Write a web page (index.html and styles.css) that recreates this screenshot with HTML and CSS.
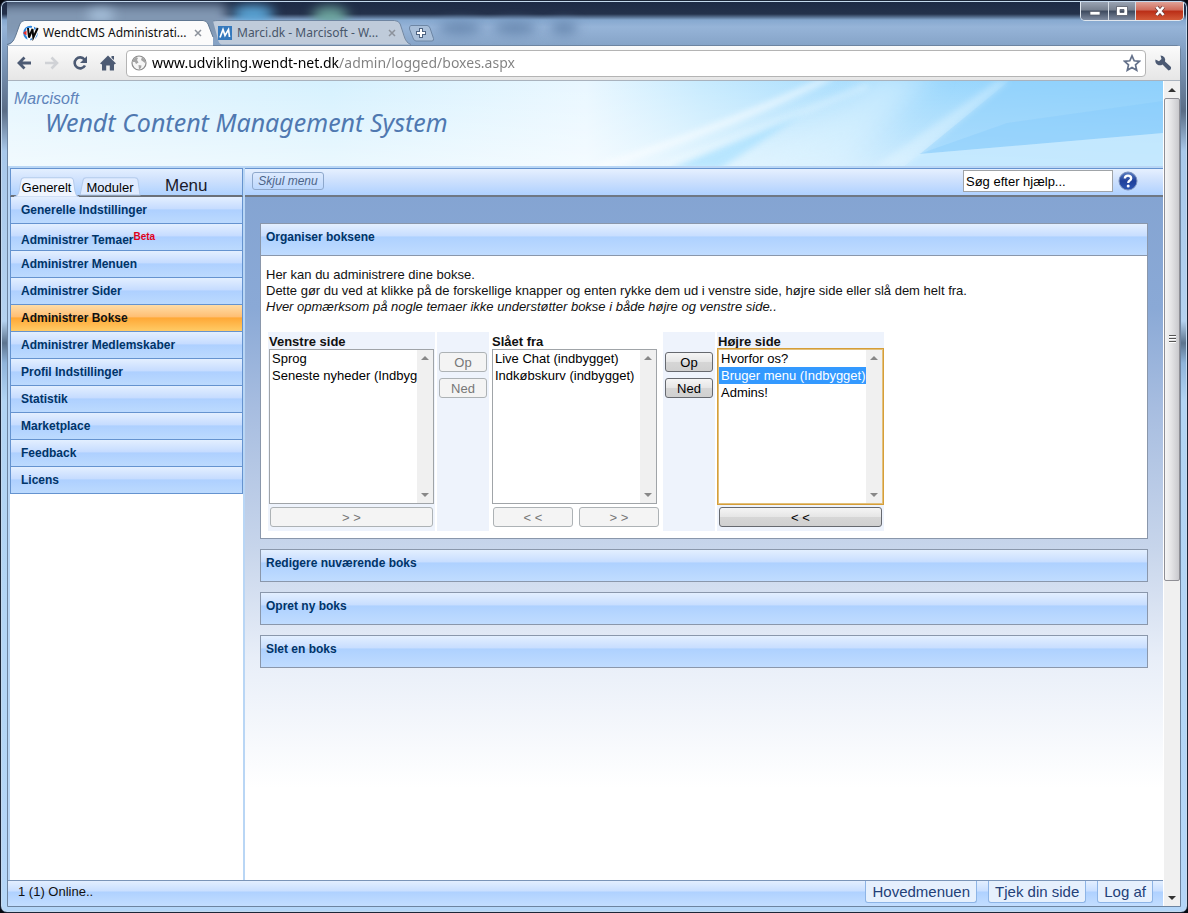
FILE: index.html
```
<!DOCTYPE html>
<html lang="da">
<head>
<meta charset="utf-8">
<title>WendtCMS Administration</title>
<link rel="stylesheet" href="styles.css">
</head>
<body>
<div class="window">
  <header class="titlebar">
    <div class="glass" aria-hidden="true">
      <span class="blob blob-cyan"></span><span class="blob blob-green"></span>
      <span class="blob blob-a"></span><span class="blob blob-b"></span><span class="blob blob-c"></span>
      <span class="blob blob-d"></span><span class="blob blob-e"></span>
    </div>
    <div class="tabs">
      <div class="tab tab-active">
        <svg class="tab-shape" viewBox="0 0 208 25" preserveAspectRatio="none"><path d="M0 25.5C6 24 7 20 9 15L13 4Q14.500 .5 18 .5H198Q201.500 .5 203 4L208 17V25.500Z" fill="#fbfbfb"/><path d="M0 24.500C6 23 7 20 9 15L13 4Q14.500 .5 18 .5H198Q201.500 .5 203 4L208 17" fill="none" stroke="#5f7690"/></svg>
        <svg class="favicon" viewBox="0 0 16 16"><circle cx="7.500" cy="8" r="6.300" fill="none" stroke="#2a83dc" stroke-width="2"/><path d="M5 3L6 13 9.500 5 10.500 13 15 3" fill="none" stroke="#fff" stroke-width="3.500"/><path d="M5 3L6 12.500 9.500 4 10.300 12.500 14.700 3" fill="none" stroke="#080808" stroke-width="2"/><path d="M0 8L3.500 5.500V10.500Z" fill="#e22a2a"/></svg>
        <span class="tab-title">WendtCMS Administrati...</span>
        <button class="tab-close" aria-label="Luk fane"><svg viewBox="0 0 8 8"><path d="M1 1L7 7M7 1L1 7"/></svg></button>
      </div>
      <div class="tab tab-idle">
        <svg class="tab-shape" viewBox="0 0 200 25" preserveAspectRatio="none"><path d="M0 1Q3 .5 5 .5H186Q190.500 .5 192 4L196.500 16Q198 23 203 24.500H9Q6 24 5 19Z" fill="#bfcbda"/><path d="M0 1Q3 .5 5 .5H186Q190.500 .5 192 4L196 16Q198 23 203 24.500" fill="none" stroke="#6e849f"/></svg>
        <svg class="favicon" viewBox="0 0 16 16"><rect x="1" y="1" width="14" height="14" fill="#3579bd"/><path d="M3 12.500L6 4.500 8 10.500 11.500 4.500 12.500 12" fill="none" stroke="#fff" stroke-width="1.700"/></svg>
        <span class="tab-title">Marci.dk - Marcisoft - W...</span>
        <button class="tab-close" aria-label="Luk fane"><svg viewBox="0 0 8 8"><path d="M1 1L7 7M7 1L1 7"/></svg></button>
      </div>
      <button class="new-tab" aria-label="Ny fane"><svg viewBox="0 0 27 17"><path d="M3 .5H19Q21 .5 22 3L25.500 13.500Q26 16 24 16H8Q6 16 5 13L1.500 4Q1 1 3 .5Z" fill="#a9bfd9" stroke="#6d86a4"/><path d="M13 3V13M8 8H18" stroke="#4e6380" stroke-width="4"/><path d="M13 4V12M9 8H17" stroke="#fff" stroke-width="2"/></svg></button>
    </div>
    <div class="caption-buttons">
      <button class="cap cap-min" aria-label="Minimer"><svg viewBox="0 0 14 12"><rect x="2" y="6.500" width="10" height="3.500" fill="#fff" stroke="#555b68" stroke-width=".7"/></svg></button>
      <button class="cap cap-max" aria-label="Maksimer"><svg viewBox="0 0 14 12"><path d="M1.500 1.500H12.500V10.500H1.500ZM5 4.500V7.500H9V4.500Z" fill="#fff" fill-rule="evenodd" stroke="#555b68" stroke-width=".8"/></svg></button>
      <button class="cap cap-close" aria-label="Luk"><svg viewBox="0 0 14 12"><path d="M3.500 2L10.500 10M10.500 2L3.500 10" stroke="#6b3a38" stroke-width="4"/><path d="M3.500 2L10.500 10M10.500 2L3.500 10" stroke="#fff" stroke-width="2.600"/></svg></button>
    </div>
  </header>

  <div class="browser">
    <nav class="toolbar" aria-label="Browser">
      <button class="nav-btn" aria-label="Tilbage"><svg viewBox="0 0 16 16"><path d="M15 8H4M8.500 2.500L3 8 8.500 13.500" fill="none" stroke="#4c5a73" stroke-width="2.800"/></svg></button>
      <button class="nav-btn" aria-label="Frem"><svg viewBox="0 0 16 16"><path d="M1 8H12M7.500 2.500L13 8 7.500 13.500" fill="none" stroke="#d0d2d6" stroke-width="2.600"/></svg></button>
      <button class="nav-btn" aria-label="Genindlæs"><svg viewBox="0 0 16 16"><path d="M12.500 4.500A5.500 5.500 0 1 0 13 10.500" fill="none" stroke="#4c5a73" stroke-width="2.600"/><path d="M15 1V8H8Z" fill="#4c5a73"/></svg></button>
      <button class="nav-btn" aria-label="Startside"><svg viewBox="0 0 16 16"><path d="M8 .5L16 8.500 14 9.500V15.500H9.800V10.500H6.200V15.500H2V9.500L0 8.500ZM11.500 1H14V5L11.500 3Z" fill="#4c5a73"/></svg></button>
      <div class="omnibox">
        <svg class="globe" viewBox="0 0 16 16"><circle cx="8" cy="8" r="7" fill="#f6f6f6" stroke="#8b8b8b" stroke-width="1.200"/><path d="M2 5L5 2 7 3 6 5 7.500 7.500 5 9 4 7 2 7ZM11 2L14 5 14 8 12 6.500 10 5ZM7.500 10L10.500 10.500 10 13 8 14.500Z" fill="#a4a4a4"/></svg>
        <input class="address" type="text" aria-label="Adresse" value="www.udvikling.wendt-net.dk/admin/logged/boxes.aspx">
        <button class="star" aria-label="Bogmærke"><svg viewBox="0 0 18 18"><path d="M9 1.800L11.200 6.800 16.500 7.300 12.500 10.900 13.700 16.200 9 13.400 4.300 16.200 5.500 10.900 1.500 7.300 6.800 6.800Z" fill="#fff" stroke="#64718a" stroke-width="1.700"/></svg></button>
      </div>
      <button class="nav-btn wrench" aria-label="Indstillinger"><svg viewBox="0 0 18 18"><path d="M6.500 1.500A4.600 4.600 0 0 1 11 7.500L17 13Q17.500 16 14.500 16.500L8.500 10.500A4.600 4.600 0 0 1 1.500 5.500L5 7.300 7.500 5Z" fill="#4c5a73"/></svg></button>
    </nav>

    <div class="viewport">
      <div class="page">
        <header class="banner">
          <svg class="banner-art" viewBox="0 0 1156 85" preserveAspectRatio="none" aria-hidden="true">
            <defs>
              <linearGradient id="sky"><stop offset="0" stop-color="#e4f5fe"/><stop offset=".28" stop-color="#d6f1fe"/><stop offset=".5" stop-color="#e9f7ff"/><stop offset=".6" stop-color="#c8ebfe"/><stop offset=".78" stop-color="#9cd8fd"/><stop offset="1" stop-color="#8fd1fc"/></linearGradient>
              <linearGradient id="fade" x2="0" y2="1"><stop offset="0" stop-color="#fff" stop-opacity="0"/><stop offset="1" stop-color="#fff" stop-opacity=".5"/></linearGradient>
              <filter id="soft" filterUnits="userSpaceOnUse" x="400" y="-60" width="800" height="200"><feGaussianBlur stdDeviation="3"/></filter>
              <filter id="soft2" filterUnits="userSpaceOnUse" x="400" y="-60" width="800" height="200"><feGaussianBlur stdDeviation="12"/></filter>
            </defs>
            <rect width="1156" height="85" fill="url(#sky)"/>
            <rect width="1156" height="85" fill="url(#fade)"/>
            <path d="M700 95L840 20 870 -10 930 -10 830 95Z" fill="#e0f4ff" opacity=".5" filter="url(#soft2)"/>
            <path d="M570 90Q700 50 815 -3H828Q720 50 590 90Z" fill="#fff" opacity=".6" filter="url(#soft)"/>
            <path d="M660 88L800 30 712 88Z" fill="#9adbff" opacity=".55" filter="url(#soft)"/>
            <path d="M660 84Q760 45 860 5" fill="none" stroke="#fff" stroke-width="5" opacity=".35" filter="url(#soft)"/>
            <path d="M898 85L1002 0H1156V85Z" fill="#8dd0fc" opacity=".5"/>
            <path d="M912 73L1000 42 1156 20V52Z" fill="#7fc8fb" opacity=".3"/>
            <path d="M898 85L912 73 1156 52V85Z" fill="#d0eeff" opacity=".7"/>
            <path d="M868 85L990 0 1002 0 898 85Z" fill="#eefaff" opacity=".35" filter="url(#soft)"/>
          </svg>
          <p class="brand">Marcisoft</p>
          <h1 class="product">Wendt Content Management System</h1>
        </header>

        <div class="workspace">
          <aside class="sidebar">
            <div class="side-head">
              <a class="side-tab side-tab-on" href="#generelt"><svg viewBox="0 0 64 20" preserveAspectRatio="none" aria-hidden="true"><path d="M0 20Q4 19 5 14L7 3Q7.500 .8 10 .8H56Q58 .8 58.500 3L60 14Q61 19 64 20Z" fill="#eff5ff" stroke="#b4cbec"/></svg><span>Generelt</span></a>
              <a class="side-tab" href="#moduler"><svg viewBox="0 0 60 20" preserveAspectRatio="none" aria-hidden="true"><path d="M1 19L4 3Q4.500 .8 7 .8H54Q56.500 .8 57 3L59 19Z" fill="#dfebff" stroke="#b4cbec"/></svg><span>Moduler</span></a>
              <h2 class="side-title">Menu</h2>
            </div>
            <nav class="menu" aria-label="Menu">
              <a href="#i1">Generelle Indstillinger</a>
              <a href="#i2" class="with-sup"><span>Administrer Temaer<sup>Beta</sup></span></a>
              <a href="#i3">Administrer Menuen</a>
              <a href="#i4">Administrer Sider</a>
              <a href="#i5" class="current">Administrer Bokse</a>
              <a href="#i6">Administrer Medlemskaber</a>
              <a href="#i7">Profil Indstillinger</a>
              <a href="#i8">Statistik</a>
              <a href="#i9">Marketplace</a>
              <a href="#i10">Feedback</a>
              <a href="#i11">Licens</a>
            </nav>
          </aside>

          <main class="main">
            <div class="main-bar">
              <button class="hide-menu">Skjul menu</button>
              <div class="help">
                <input class="help-search" type="text" aria-label="Søg efter hjælp" value="Søg efter hjælp...">
                <button class="help-btn" aria-label="Hjælp"><svg viewBox="0 0 20 20"><defs><linearGradient id="hb" x2="0" y2="1"><stop offset="0" stop-color="#5a7fc4"/><stop offset=".5" stop-color="#20409a"/><stop offset="1" stop-color="#2c56b4"/></linearGradient></defs><circle cx="10" cy="10" r="9" fill="url(#hb)" stroke="#7b90bd"/><path d="M6.800 7.500Q7 4.600 10 4.600T13.200 7.300Q13.200 8.700 11.500 9.700 10.300 10.500 10.200 12" fill="none" stroke="#fff" stroke-width="2.300"/><circle cx="10.200" cy="15" r="1.500" fill="#fff"/></svg></button>
              </div>
            </div>
            <div class="panels">
              <section class="panel">
                <h3 class="panel-head">Organiser boksene</h3>
                <div class="panel-body">
                  <p>Her kan du administrere dine bokse.<br>Dette gør du ved at klikke på de forskellige knapper og enten rykke dem ud i venstre side, højre side eller slå dem helt fra.<br><em>Hver opmærksom på nogle temaer ikke understøtter bokse i både højre og venstre side..</em></p>
                  <div class="columns">
                    <div class="col col-list tint">
                      <label for="left">Venstre side</label>
                      <div class="listbox"><select id="left" size="9"><option>Sprog</option><option>Seneste nyheder (Indbygget)</option></select><span class="mini-bar"></span></div>
                      <div class="moves"><button disabled>&gt; &gt;</button></div>
                    </div>
                    <div class="col col-order tint"><button disabled>Op</button><button disabled>Ned</button></div>
                    <div class="col col-list">
                      <label for="off">Slået fra</label>
                      <div class="listbox"><select id="off" size="9"><option>Live Chat (indbygget)</option><option>Indkøbskurv (indbygget)</option></select><span class="mini-bar"></span></div>
                      <div class="moves"><button disabled>&lt; &lt;</button><button disabled>&gt; &gt;</button></div>
                    </div>
                    <div class="col col-order tint"><button>Op</button><button>Ned</button></div>
                    <div class="col col-list tint">
                      <label for="right">Højre side</label>
                      <div class="listbox listbox-focus"><select id="right" size="9"><option>Hvorfor os?</option><option selected>Bruger menu (Indbygget)</option><option>Admins!</option></select><span class="mini-bar"></span></div>
                      <div class="moves"><button>&lt; &lt;</button></div>
                    </div>
                  </div>
                </div>
              </section>
              <section class="panel"><h3 class="panel-head">Redigere nuværende boks</h3></section>
              <section class="panel"><h3 class="panel-head">Opret ny boks</h3></section>
              <section class="panel"><h3 class="panel-head">Slet en boks</h3></section>
            </div>
          </main>
        </div>

        <footer class="footer">
          <span class="online">1 (1) Online..</span>
          <nav class="foot-links" aria-label="Genveje">
            <a href="#hoved">Hovedmenuen</a><a href="#side">Tjek din side</a><a href="#logaf">Log af</a>
          </nav>
        </footer>
      </div>
      <div class="scrollbar" aria-hidden="true">
        <span class="arrow arrow-up"></span>
        <div class="track"><div class="thumb"><i></i></div></div>
        <span class="arrow arrow-down"></span>
      </div>
    </div>
  </div>
</div>
</body>
</html>
```
FILE: styles.css
```
* { box-sizing: border-box; }
html, body { height: 100%; }
body { margin: 0; background: #05070f; font-family: "Liberation Sans", Arial, sans-serif; font-size: 12px; color: #111; }
button { font-family: inherit; padding: 0; margin: 0; border: 0; background: none; }
a { color: inherit; text-decoration: none; }
svg { display: block; }
h1, h2, h3, p { margin: 0; font-weight: normal; }

/* Window frame */
.window {
  display: flex; flex-direction: column; min-height: 100%; padding: 0 6px 5px;
  border: 1px solid #1c2638; border-radius: 7px; position: relative;
  background: linear-gradient(#1d2a45 0, #24314b 13px, #86a8cf 19px, #96b4d8 26px, #86a4c8 44px, #5a6d86 110px, #a8c8ea 150px, #b4d2f0 320px, #5c748e 342px, #8fb4da 362px, #b2d4f3 400px, #b4d6f8);
  box-shadow: inset 0 0 0 1px #c4d9ee;
}
.titlebar { position: relative; display: flex; justify-content: space-between; height: 44px; }
.glass { position: absolute; inset: 1px 0 0; overflow: hidden; }
.blob { position: absolute; border-radius: 50%; filter: blur(6px); }
.blob-cyan { left: 225px; top: 4px; width: 42px; height: 16px; background: #5fb0e4; }
.blob-green { left: 305px; top: 5px; width: 36px; height: 18px; background: #6fa9a0; }
.blob-a { left: -10px; top: 2px; width: 230px; height: 34px; border-radius: 6px; background: #8197b2; }
.blob-b { left: 80px; top: 8px; width: 28px; height: 10px; background: #b3cee8; }
.blob-c { left: 431px; top: 20px; width: 44px; height: 12px; background: #6484ac; }
.blob-d { left: 486px; top: 20px; width: 44px; height: 12px; background: #6484ac; }
.blob-e { left: 543px; top: 20px; width: 28px; height: 12px; background: #6484ac; }

.tabs { display: flex; align-items: flex-end; position: relative; }
.tab { position: relative; display: flex; align-items: center; height: 25px; font-family: "Noto Sans", "Open Sans", sans-serif; font-size: 12px; }
.tab-active { width: 206px; padding-left: 16px; z-index: 1; }
.tab-idle { width: 195px; padding-left: 4px; color: #48566a; }
.tab-shape { position: absolute; left: 0; top: 0; width: 100%; height: 100%; overflow: visible; }
.favicon { position: relative; width: 16px; height: 16px; margin-right: 4px; flex: none; }
.tab-title { position: relative; flex: 1; white-space: nowrap; }
.tab-close { position: relative; width: 8px; height: 8px; margin-right: 11px; }
.tab-idle .tab-close { margin-right: 12px; }
.tab-close path { stroke: #8c929b; stroke-width: 1.500; }
.new-tab { width: 27px; height: 17px; margin-bottom: 3px; }

.caption-buttons { position: relative; display: flex; height: 19px; margin: 1px -3px 0 0; border: 1px solid #dfe6ee; border-top: 0; border-radius: 0 0 5px 5px; overflow: hidden; }
.cap { display: flex; align-items: center; justify-content: center; width: 28px; height: 18px; background: linear-gradient(#9aa3b2, #76808f 45%, #3c485d 50%, #7e8ba0); border-right: 1px solid #d5dce5; }
.cap svg { width: 14px; height: 12px; }
.cap-max { width: 27px; }
.cap-close { width: 47px; border: 0; background: linear-gradient(#e0a297, #cf6a59 45%, #ba2d16 50%, #d35a38); }

.browser { flex: 1; display: flex; flex-direction: column; border: 1px solid #6d84a0; border-radius: 0 4px 0 0; background: #f0f0f0; }
.toolbar { display: flex; align-items: center; height: 35px; padding: 0 8px; background: linear-gradient(#fbfbfb, #e6e6e6); border-bottom: 1px solid #a9b2bd; }
.nav-btn { width: 16px; height: 16px; margin-right: 12px; flex: none; }
.omnibox { flex: 1; display: flex; align-items: center; height: 27px; padding: 0 4px; margin-left: -2px; border: 1px solid #b4b4b4; border-radius: 4px; background: #fff; }
.globe { width: 16px; height: 16px; margin-right: 5px; flex: none; }
.address {
  flex: 1; min-width: 0; height: 24px; padding: 0 0 2px; border: 0; outline: 0; font: 14px "Noto Sans", "Open Sans", sans-serif;
  background: linear-gradient(90deg, #000 187px, #808080 187px); background-clip: text; -webkit-background-clip: text; color: transparent;
}
.star, .star svg { width: 18px; height: 18px; }
.wrench { width: 18px; height: 18px; margin: 0 0 0 8px; }

/* Page */
.viewport { flex: 1; display: flex; background: #fff; }
.page { flex: 1; min-width: 0; display: flex; flex-direction: column; }
.banner { position: relative; height: 85px; padding: 9px 6px 0; color: #4f78b0; font-style: italic; overflow: hidden; }
.banner-art { position: absolute; left: 0; top: 0; width: 100%; height: 100%; }
.brand { position: relative; font-size: 16px; line-height: 18px; color: #5f84ba; }
.product { position: relative; padding-left: 31px; font: italic 25px/28px "Noto Sans", "Open Sans", sans-serif; }

.workspace { flex: 1; display: flex; gap: 2px; padding-left: 2px; background: #b9d6f5; border-top: 2px solid #b9d6f5; }
.sidebar { width: 233px; flex: none; background: #fff; }
.side-head { display: flex; align-items: flex-end; height: 29px; padding-left: 3px; border: 1px solid #6593cf; border-bottom: 2px solid #6a7078; background: linear-gradient(#e3efff, #d0e2fd 40%, #afd2ff); }
.side-tab { position: relative; width: 62px; height: 19px; margin-bottom: -1px; padding-top: 2px; text-align: center; font-size: 13px; line-height: 17px; color: #000; }
.side-tab-on { width: 65px; height: 20px; padding-top: 2px; margin-bottom: -2px; }
.side-tab svg { position: absolute; left: 0; top: 0; width: 100%; height: 100%; }
.side-tab span { position: relative; }
.side-title { padding: 0 0 0 24px; margin-bottom: -2px; font-size: 17px; line-height: 22px; color: #1a1a2a; }
.menu { border: 1px solid #6593cf; border-top: 0; }
.menu a {
  display: flex; align-items: center; height: 27px; padding-left: 10px; border-bottom: 1px solid #6593cf;
  font-weight: bold; color: #003468; background: linear-gradient(#e3efff 0, #c6dcff 45%, #aed0ff 50%, #bcdafe);
}
.menu a:last-child { height: 26px; border: 0; }
.menu .current { color: #111; background: linear-gradient(#ffdca6, #ffbf74 45%, #ffa836 50%, #ffcb66); }
.menu .with-sup { align-items: flex-end; padding-bottom: 3px; line-height: 14px; }
.menu sup { font-size: 10px; line-height: 10px; vertical-align: 4px; color: #e0001a; }

.main { flex: 1; min-width: 0; display: flex; flex-direction: column; background: #fff linear-gradient(#83a3d1 0, #8aa9d6 140px, #a7bde0 240px, #c7d5eb 380px, #e8eef8 490px, #fff 620px); }
.main-bar { display: flex; align-items: center; justify-content: space-between; height: 29px; padding: 0 25px 2px 7px; border-top: 1px solid #6593cf; border-bottom: 2px solid #6f7884; background: linear-gradient(#e6f0ff, #d0e2fd 40%, #afd1ff); }
.hide-menu { width: 72px; height: 18px; border: 1px solid #8ea8cc; border-radius: 3px; font-size: 12px; font-style: italic; color: #4c6488; }
.help { display: flex; align-items: center; gap: 5px; }
.help-search { width: 150px; height: 22px; padding: 0 2px; border: 1px solid #a0a4a8; background: #fff; font: 13px "Liberation Sans", Arial, sans-serif; }
.help-btn, .help-btn svg { width: 20px; height: 20px; }
.panels { display: flex; flex-direction: column; gap: 10px; padding: 26px 15px; }
.panel { border: 1px solid #8a97ab; background: #fff; }
.panel-head { height: 31px; padding: 6px 5px; font-size: 12px; line-height: 14px; font-weight: bold; color: #003468; background: linear-gradient(#e3efff 0, #c8deff 38%, #aed1ff 42%, #c0dcff); }
.panel-body { padding: 11px 5px 7px 7px; border-top: 1px solid #8a97ab; }
.panel-body p { margin-left: -2px; font-size: 13px; line-height: 16px; }
.columns { display: flex; gap: 2px; margin-top: 17px; }
.col { display: flex; flex-direction: column; height: 199px; }
.tint { background: #eef3fc; }
.col-list { width: 167px; padding: 2px 1px 4px; }
.columns > .col-list:nth-child(3) { width: 170px; }
.col-list label { font-size: 13px; line-height: 15px; font-weight: bold; }
.listbox { display: flex; width: 165px; height: 155px; border: 1px solid #a0a4a8; background: #fff; }
.listbox-focus { outline: 1px solid #d69e38; border-color: #e2c07c; }
.listbox select { flex: 1; min-width: 0; height: 100%; padding: 0; border: 0; border-radius: 0; outline: 0; overflow: hidden; background: #fff; font: 13px "Liberation Sans", Arial, sans-serif; color: #000; }
.listbox option { min-height: 17px; height: 17px; padding: 1px 2px; line-height: 15px; }
.listbox option:checked { color: #fff; background: linear-gradient(#3399ff, #3399ff); }
.mini-bar { position: relative; width: 16px; background: #f0f0f0; }
.mini-bar::before, .mini-bar::after { content: ""; position: absolute; left: 4px; border: 4px solid transparent; }
.mini-bar::before { top: 2px; border-bottom-color: #888; }
.mini-bar::after { bottom: 2px; border-top-color: #888; }
.moves { display: flex; gap: 6px; padding: 3px 1px 0; }
.moves button, .col-order button { flex: 1; height: 20px; border: 1px solid #66696f; border-radius: 3px; font-size: 13px; line-height: 17px; color: #000; background: linear-gradient(#f5f5f5, #e6e6e6 48%, #d6d6d6 52%, #d0d0d0); }
.moves button:disabled, .col-order button:disabled { border-color: #adb2b5; color: #777; background: #f4f4f4; }
.col-order { width: 52px; padding: 20px 2px; gap: 6px; }
.col-order button { flex: none; }

.footer { display: flex; justify-content: space-between; align-items: flex-start; height: 26px; padding: 0 10px; border-top: 1px solid #7b95b8; background: linear-gradient(#e3efff, #c9dfff 40%, #afd1ff 44%, #c3deff); }
.online { font-size: 13px; line-height: 21px; }
.foot-links { display: flex; gap: 11px; }
.foot-links a { height: 22px; padding: 0 6px; border: 1px solid #8db4e6; border-top: 0; border-radius: 0 0 3px 3px; font-size: 15px; line-height: 21px; color: #234078; background: #e6f0fd; }

.scrollbar { display: flex; flex-direction: column; width: 17px; background: #f0f0f0; border-left: 1px solid #fff; }
.arrow { height: 17px; display: flex; align-items: center; justify-content: center; }
.arrow::before { content: ""; border: 4px solid transparent; }
.arrow-up::before { border-bottom-color: #333; margin-bottom: 4px; }
.arrow-down::before { border-top-color: #333; margin-top: 4px; }
.track { flex: 1; }
.thumb { height: 61%; display: flex; align-items: center; justify-content: center; border: 1px solid #8f8f95; border-radius: 2px; background: linear-gradient(90deg, #f5f5f5, #e4e4e6 45%, #c9c9cd); }
.thumb i { width: 7px; height: 9px; background: repeating-linear-gradient(#555 0 1px, #fff 1px 2px, transparent 2px 3px); }
```
